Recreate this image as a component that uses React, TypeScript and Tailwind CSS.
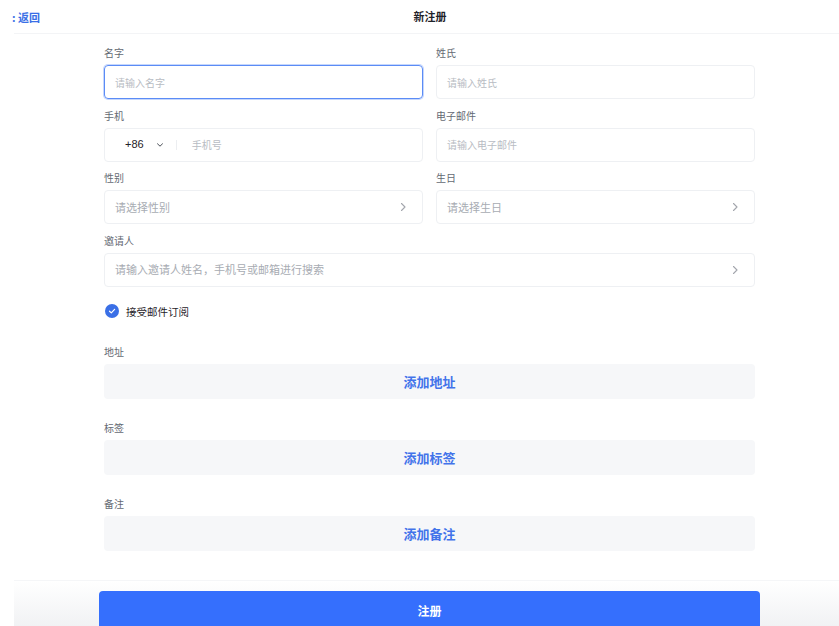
import React from "react";

const font = { fontFamily: '"Noto Sans CJK SC", "Noto Sans", sans-serif' };

function Chevron() {
  return (
    <svg width="10" height="10" viewBox="0 0 10 10" fill="none" className="text-[#a3a6ad]">
      <path d="M3.5 1.5L7 5L3.5 8.5" stroke="currentColor" strokeWidth="1.1" strokeLinecap="round" strokeLinejoin="round" />
    </svg>
  );
}

function Field({ label, children }: { label: string; children: React.ReactNode }) {
  return (
    <div className="flex flex-col">
      <span className="mb-[6px] h-[12px] text-[10px] leading-[12px] text-[#646a73]">{label}</span>
      {children}
    </div>
  );
}

function TextInput({ placeholder, focused }: { placeholder: string; focused?: boolean }) {
  return (
    <div
      className={`flex h-[34px] items-center rounded-[4px] border px-[10px] text-[10px] text-[#b8bcc3] ${
        focused ? "border-[#5b8cf6] shadow-[0_0_0_1px_rgba(91,140,246,0.35)]" : "border-[#eef0f3]"
      }`}
    >
      {placeholder}
    </div>
  );
}

function SelectInput({ placeholder }: { placeholder: string }) {
  return (
    <div className="flex h-[34px] items-center justify-between rounded-[4px] border border-[#eef0f3] pl-[10px] pr-[14px] text-[11px] text-[#a8acb3]">
      <span>{placeholder}</span>
      <Chevron />
    </div>
  );
}

function AddBlock({ label, action }: { label: string; action: string }) {
  return (
    <div className="flex flex-col">
      <span className="mb-[6px] h-[12px] text-[10px] leading-[12px] text-[#646a73]">{label}</span>
      <button
        type="button"
        className="flex h-[35px] items-center justify-center rounded-[4px] bg-[#f6f7f9] text-[13px] font-bold text-[#4273ea]"
      >
        {action}
      </button>
    </div>
  );
}

export default function App() {
  return (
    <div className="flex h-[626px] w-[839px] flex-col overflow-hidden bg-white" style={font}>
      <div className="relative ml-[14px] flex h-[34px] shrink-0 items-center justify-center border-b border-[#f3f4f6]">
        <span className="absolute left-[-2px] top-[9px] text-[11px] font-bold text-[#3a6fe6]">: 返回</span>
        <span className="ml-[7px] text-[11px] font-bold text-[#1f2329]">新注册</span>
      </div>

      <div className="ml-[104px] mt-[13px] flex w-[651px] flex-1 flex-col">
        <div className="grid grid-cols-2 gap-x-[13px] gap-y-[10.5px]">
          <Field label="名字">
            <TextInput placeholder="请输入名字" focused />
          </Field>
          <Field label="姓氏">
            <TextInput placeholder="请输入姓氏" />
          </Field>
          <Field label="手机">
            <div className="flex h-[34px] items-center rounded-[4px] border border-[#eef0f3] text-[10px]">
              <span className="ml-[20px] text-[11px] text-[#1f2329]" style={{ fontFamily: '"Liberation Sans", sans-serif' }}>+86</span>
              <svg width="8" height="8" viewBox="0 0 8 8" fill="none" className="ml-[12px]">
                <path d="M1.5 2.8L4 5.2L6.5 2.8" stroke="#4b5058" strokeWidth="1" strokeLinecap="round" strokeLinejoin="round" />
              </svg>
              <span className="ml-[12px] h-[10px] w-px bg-[#eceef1]" />
              <span className="ml-[15px] text-[#b8bcc3]">手机号</span>
            </div>
          </Field>
          <Field label="电子邮件">
            <TextInput placeholder="请输入电子邮件" />
          </Field>
          <Field label="性别">
            <SelectInput placeholder="请选择性别" />
          </Field>
          <Field label="生日">
            <SelectInput placeholder="请选择生日" />
          </Field>
          <div className="col-span-2">
            <Field label="邀请人">
              <SelectInput placeholder="请输入邀请人姓名，手机号或邮箱进行搜索" />
            </Field>
          </div>
        </div>

        <label className="mt-[17px] flex items-center gap-[7px]">
          <span className="ml-[1px] flex h-[14px] w-[14px] items-center justify-center rounded-full bg-[#3a6fe6]">
            <svg width="8" height="8" viewBox="0 0 8 8" fill="none">
              <path d="M1.5 4.2L3.3 5.9L6.6 2.3" stroke="white" strokeWidth="1.2" strokeLinecap="round" strokeLinejoin="round" />
            </svg>
          </span>
          <span className="text-[10.5px] text-[#1f2329]">接受邮件订阅</span>
        </label>

        <div className="mt-[27px] flex flex-col gap-[23px]">
          <AddBlock label="地址" action="添加地址" />
          <AddBlock label="标签" action="添加标签" />
          <AddBlock label="备注" action="添加备注" />
        </div>
      </div>

      <div className="ml-[14px] flex h-[46px] shrink-0 border-t border-[#f5f6f8] bg-gradient-to-b from-white to-[#f1f2f4] pl-[85px] pt-[10px]">
        <button
          type="button"
          className="h-[40px] w-[661px] rounded-[4px] bg-[#356ffd] text-[12px] font-bold text-white"
        >
          注册
        </button>
      </div>
    </div>
  );
}
